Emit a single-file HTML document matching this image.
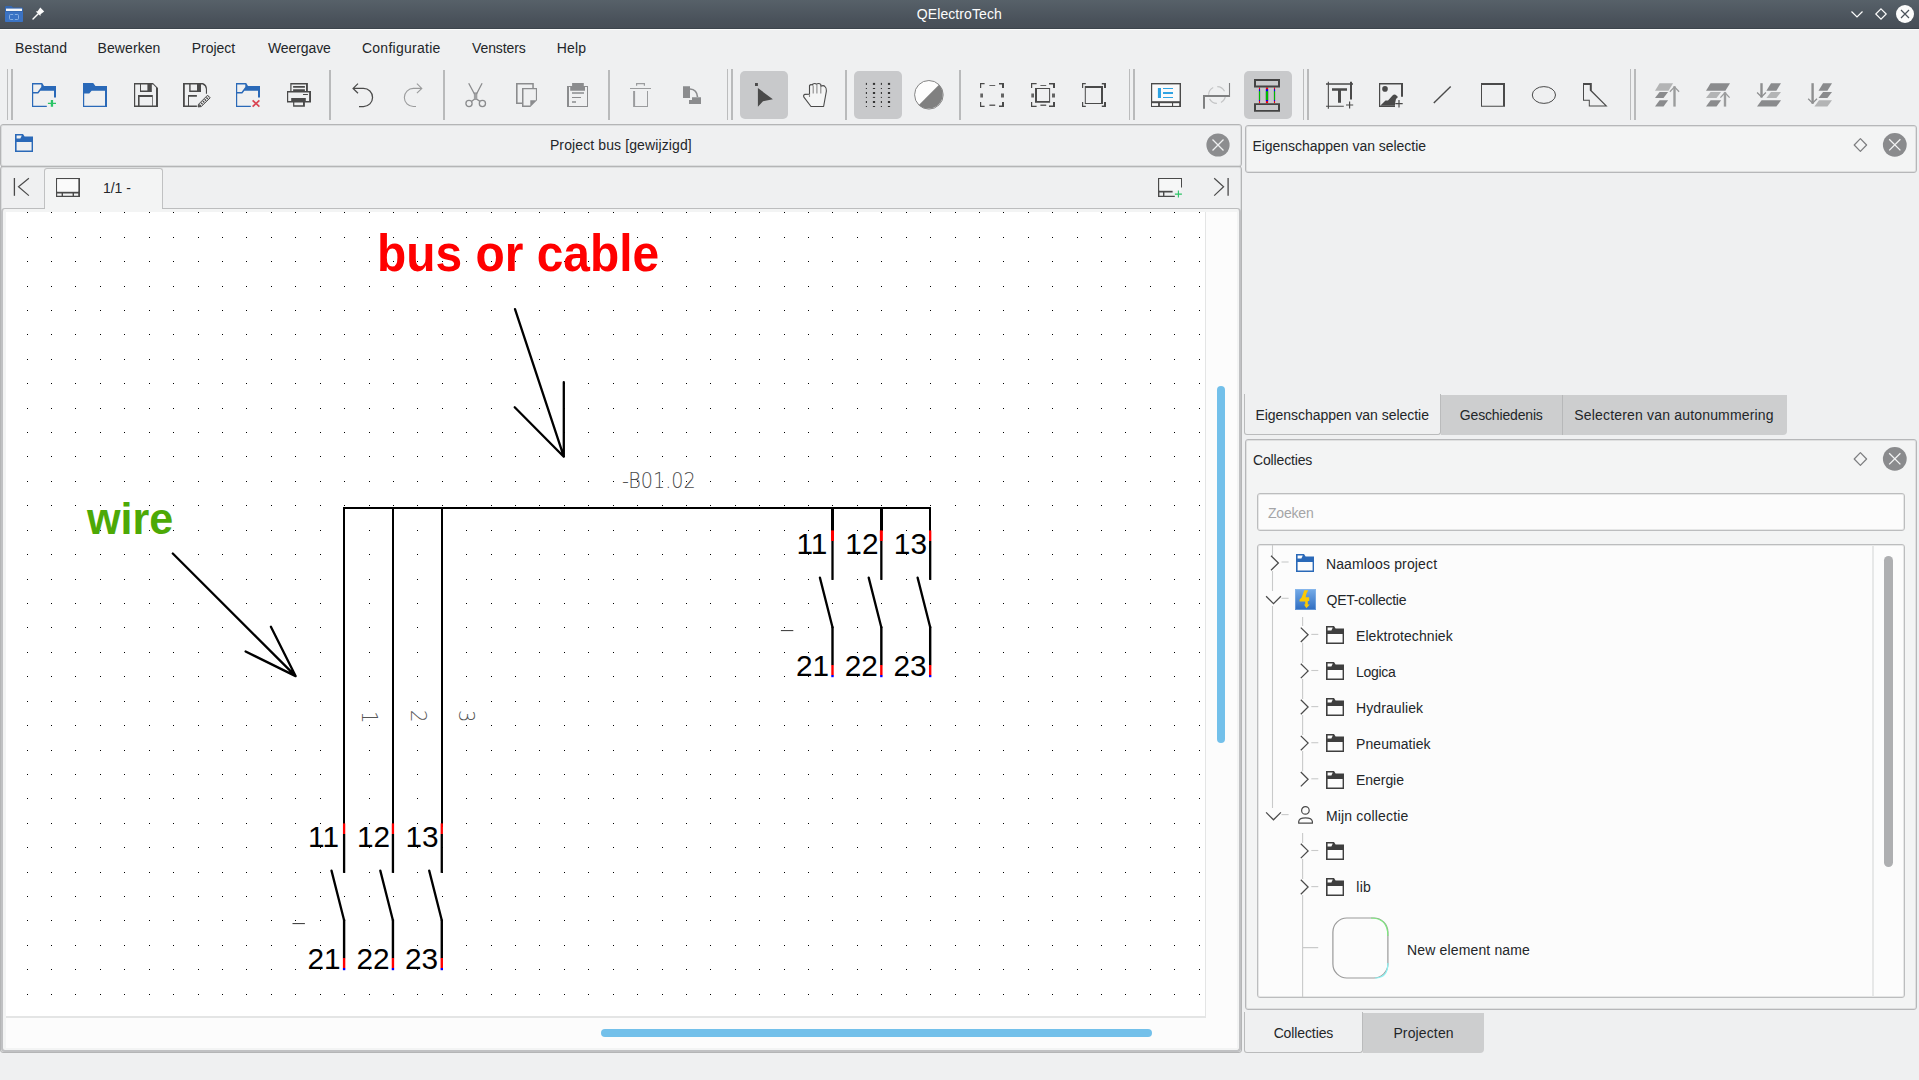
<!DOCTYPE html>
<html lang="nl"><head><meta charset="utf-8"><title>QElectroTech</title>
<style>
html,body{margin:0;padding:0}
body{width:1919px;height:1080px;overflow:hidden;position:relative;background:#eff0f1;font-family:"Liberation Sans",sans-serif;font-size:14px;color:#232629}
.a{position:absolute}
.t{position:absolute;white-space:pre;line-height:1}
svg{position:absolute;overflow:visible}
#titlebar{left:0;top:0;width:1919px;height:29px;background:linear-gradient(#576169,#4a525b 68%,#474e57 96%,#3c444c 97%)}
#tbline{left:0;top:29px;width:1919px;height:1px;background:#fbfbfb}
.frame{position:absolute;box-sizing:border-box;border:1px solid #b6b7b8;border-radius:3px;box-shadow:inset 0 0 0 1px rgba(120,122,125,.16)}
.sep{position:absolute;top:70px;height:50px;width:2px;background:#b9babb}
.h1{position:absolute;top:69px;height:51px;width:1px;background:#bbbcbd}
.h2{position:absolute;top:69px;height:51px;width:2px;background:#b9babb}
.chk{position:absolute;top:71px;height:48px;width:48px;background:#c8c9cb;border-radius:5px}
</style></head><body>
<div id="titlebar" class="a"></div><div id="tbline" class="a"></div>
<svg style="left:5px;top:6px" width="18" height="16" viewBox="0 0 18 16">
<path d="M0 1.2 Q0 0 1.2 0 H6.5 L8 1.6 H16.8 Q18 1.6 18 2.8 V14.8 Q18 16 16.8 16 H1.2 Q0 16 0 14.8Z" fill="#3467b0"/>
<rect x="1" y="2.6" width="16" height="2.4" fill="#f4f6f8"/>
<path d="M0 6 H18 V14.8 Q18 16 16.8 16 H1.2 Q0 16 0 14.8Z" fill="#3b73c4"/>
<rect x="4.5" y="8.5" width="9" height="5" rx="1" fill="none" stroke="#8fb6e6" stroke-width="0.9"/>
<path d="M8 8.5 h2 M8 13.5 h2" stroke="#3f7fcf" stroke-width="1.4"/>
</svg>
<svg style="left:32px;top:7px" width="13" height="13" viewBox="0 0 13 13">
<path d="M8.3 0.6 L12.2 4.6 L8.6 7.2 L8.4 9 L3.8 4.4 L5.6 4.2 Z" fill="#fcfcfc"/>
<path d="M6 7 L1 12" stroke="#fcfcfc" stroke-width="1.4" stroke-linecap="round"/>
</svg>
<span class="t" style="left:916.84px;top:6.85px;color:#fcfcfc;letter-spacing:0.083px;">QElectroTech</span>
<svg style="left:1845px;top:0" width="74" height="29" viewBox="1845 0 74 29">
<path d="M1851.5 11.5 L1857 17 L1862.5 11.5" fill="none" stroke="#fcfcfc" stroke-width="1.2"/>
<path d="M1881 8.8 L1886.2 14 L1881 19.2 L1875.8 14 Z" fill="none" stroke="#fcfcfc" stroke-width="1.2"/>
<circle cx="1905" cy="14" r="9" fill="#fcfcfc"/>
<path d="M1901 10 L1909 18 M1909 10 L1901 18" stroke="#4a525a" stroke-width="1.2"/>
</svg>
<span class="t" style="left:15.11px;top:41.20px;letter-spacing:0.085px;">Bestand</span>
<span class="t" style="left:97.51px;top:41.20px;letter-spacing:0.089px;">Bewerken</span>
<span class="t" style="left:191.81px;top:41.20px;letter-spacing:-0.038px;">Project</span>
<span class="t" style="left:268.00px;top:41.20px;letter-spacing:-0.098px;">Weergave</span>
<span class="t" style="left:361.94px;top:41.20px;letter-spacing:0.267px;">Configuratie</span>
<span class="t" style="left:472.00px;top:41.20px;letter-spacing:-0.091px;">Vensters</span>
<span class="t" style="left:556.81px;top:41.20px;letter-spacing:0.123px;">Help</span>
<div class="h1" style="left:7px"></div><div class="h2" style="left:11px"></div>
<div class="h1" style="left:727px"></div><div class="h2" style="left:731px"></div>
<div class="h1" style="left:1129px"></div><div class="h2" style="left:1133px"></div>
<div class="h1" style="left:1303px"></div><div class="h2" style="left:1307px"></div>
<div class="h1" style="left:1630px"></div><div class="h2" style="left:1634px"></div>
<div class="sep" style="left:329px"></div>
<div class="sep" style="left:443px"></div>
<div class="sep" style="left:608px"></div>
<div class="sep" style="left:845px"></div>
<div class="sep" style="left:959px"></div>
<div class="chk" style="left:739.6px"></div>
<div class="chk" style="left:853.6px"></div>
<div class="chk" style="left:1243.6px"></div>
<svg style="left:32px;top:83px" width="24" height="24" viewBox="0 0 24 24"><path fill="#2a69b8" d="M0 0H10.2L12 3.05H24V14.5H22V7.7H8.4L6.3 10.5H1.2V22.8H14.8V24H0Z M1.2 1.6V9.1H5.6L9.3 3.9V1.6Z" fill-rule="evenodd"/><path d="M18.8 16.9h2.3v2.8H24v1.4h-2.9v2.7h-2.3v-2.7h-2.9v-1.4h2.9z" fill="#2bc466"/></svg>
<svg style="left:83px;top:83px" width="24" height="24" viewBox="0 0 24 24"><path fill="#2a69b8" fill-rule="evenodd" d="M0 0H10.2L12.4 3.05H24V24H0Z M1.2 10.5V22.8H22V7.7H8.6L6.3 10.5Z"/></svg>
<svg style="left:134px;top:83px" width="24" height="24" viewBox="0 0 24 24"><path fill="#4a4a4a" fill-rule="evenodd" d="M0 0H19L24 5V24H0Z M1.2 1.6V22.5H4V12H18.8V22.5H22V4.5L19.1 1.6H17.8V8.9H6V1.6Z M7 1.6V7.5H13.4V1.6Z M5.6 13.9V22.5H18.1V13.9Z"/></svg>
<svg style="left:183px;top:83px" width="28" height="24" viewBox="0 0 28 24"><path fill="#4a4a4a" fill-rule="evenodd" d="M0 0H20Q24 1.5 24 6V10.8H22.9V6Q22.6 3 19.6 1.6H18V8.9H6.2V1.6H1.8V22.6H5V12H13.9V13.8H6V22.6H13.9V24H0Z M7.6 1.6V7.5H14V1.6Z"/><path d="M15 23.9L15.6 21.2L24.6 12.2L27.2 14.8L18.2 23.6Z" fill="none" stroke="#4a4a4a" stroke-width="1"/><path d="M16.6 22.8L25.8 13.6" stroke="#4a4a4a" stroke-width="2.2" stroke-dasharray="1.3 1.2"/><path d="M15 23.9L15.6 21.4L17.6 23.4Z" fill="#4a4a4a"/></svg>
<svg style="left:236px;top:83px" width="24" height="24" viewBox="0 0 24 24"><path fill="#2a69b8" d="M0 0H10.2L12 3.05H24V14.5H22V7.7H8.4L6.3 10.5H1.2V22.8H14.8V24H0Z M1.2 1.6V9.1H5.6L9.3 3.9V1.6Z" fill-rule="evenodd"/><path d="M16.6 17.4L23.4 23.6M23.4 17.4L16.6 23.6" stroke="#da4453" stroke-width="1.7"/></svg>
<svg style="left:287px;top:83px" width="24" height="24" viewBox="0 0 24 24"><path fill="#4a4a4a" fill-rule="evenodd" d="M3.3 0H20.9V8H24V19.6H17.9V23.8H6.1V19.6H0V8H3.3Z M4.5 1.6V8H6.1V6.2H17.9V8H19V1.6Z M6.1 3H17.9V4.7H6.1Z M1.2 9.4V18.1H4.2V15.1H18.8V18.1H22.1V9.4Z M16 10.9H20.9V12H16Z M7.3 19.6V22.3H16V19.6Z"/><path d="M4.5 1.6H19V8H4.5Z M1.2 9.4H22.1V18.1H1.2Z M7.3 19.6H16V22.3H7.3Z" fill="#fbfbfb" style="mix-blend-mode:normal" opacity="0"/></svg>
<svg style="left:350px;top:80px" width="26" height="30" viewBox="0 0 26 30"><path d="M8 3.6L3.1 8.4L8 13.2M3.1 8.4H13.5A9.05 9.05 0 0 1 13.5 26.5H9" fill="none" stroke="#4a4a4a" stroke-width="1.25"/></svg>
<svg style="left:400px;top:80px" width="26" height="30" viewBox="0 0 26 30"><path d="M16.9 3.6L21.8 8.4L16.9 13.2M21.8 8.4H13.4A9.05 9.05 0 0 0 13.4 26.5H16" fill="none" stroke="#9a9b9c" stroke-width="1.1"/></svg>
<svg style="left:464px;top:82px" width="24" height="26" viewBox="0 0 24 26"><g fill="none" stroke="#8b8c8e" stroke-width="1.3"><path d="M4.7 1.3L10.6 12.2M18.1 1.3L12.4 12.2"/><circle cx="5" cy="21.5" r="3.1"/><circle cx="18.4" cy="21.5" r="3.1"/><path d="M10.4 17.2L7.4 19.4M12.8 17.2L16 19.4"/></g><rect x="9.9" y="10.4" width="3.4" height="7.6" fill="#8b8c8e" opacity=".8"/></svg>
<svg style="left:516px;top:83px" width="22" height="24" viewBox="0 0 22 24"><path fill="#8b8c8e" fill-rule="evenodd" d="M0 0H17.8V5H21V17.2L14.3 23.9H6V21H0Z M1.6 1.6V19.5H6V5H16.3V1.6Z M7.5 6.2V22.5H14.3V17.2H19.9V6.2Z"/></svg>
<svg style="left:567px;top:83px" width="21" height="24" viewBox="0 0 21 24"><path fill="#8b8c8e" fill-rule="evenodd" d="M5.1 0H16.8V3H21V24H0V3H5.1Z M2 4V23H20V4H18V7.7H3.2V4Z M5 9.2H17V10.8H5Z M5 13.9H14V14.9H5Z M5 18.2H9V19.8H5Z"/></svg>
<svg style="left:630px;top:83px" width="21" height="24" viewBox="0 0 21 24"><path fill="#9b9c9e" fill-rule="evenodd" d="M6 0H15V2.8H13.8V1.3H7.2V2.8H6Z M0 5H21V6.1H0Z M3.1 8H5.1V23H17V8H18V24H3.1Z"/></svg>
<svg style="left:683px;top:86px" width="18" height="18" viewBox="0 0 18 18"><path fill="#8b8c8e" d="M0 0.2H7V12H0Z M9 11.2H18V18H6V14H9Z"/><path d="M7 3Q14 3.5 14.5 11" fill="none" stroke="#8b8c8e" stroke-width="1.6"/></svg>
<svg style="left:755px;top:83px" width="18" height="24" viewBox="0 0 18 24"><path fill="#4a4a4a" d="M0 0H2.9V3H0Z M2.9 5.1L17.9 16.2L8 18.2L2.9 23.8Z"/></svg>
<svg style="left:803px;top:83px" width="24" height="24" viewBox="0 0 24 24"><path d="M8 23.5L0.9 14.2Q0 12.2 1.6 11.4L6.5 11.2V2.6Q7.6 0.9 9.6 2V1.2Q12 -0.3 13.4 1.2Q15.8 -0.2 17.8 1.4V3.2Q20.6 1.8 22 3.6Q23.6 5 23.4 8L20.6 23.5Z" fill="#f4f5f5" stroke="#4a4a4a" stroke-width="1.1" stroke-linejoin="round"/><path d="M6.5 11.2V14M10.2 2.5V10.5M13.9 1.8V10.5M17.8 3.2V10.5" stroke="#8a8a8a" stroke-width="1.1" fill="none"/></svg>
<svg style="left:865px;top:83px" width="26" height="24" viewBox="0 0 26 24"><rect x="0.85" y="-0.10" width="1.1" height="2.0" fill="#333"/><rect x="0.85" y="5.00" width="1.1" height="1.0" fill="#333"/><rect x="0.85" y="9.00" width="1.1" height="2.0" fill="#333"/><rect x="0.85" y="13.90" width="1.1" height="1.0" fill="#333"/><rect x="0.85" y="18.00" width="1.1" height="2.0" fill="#333"/><rect x="0.85" y="23.00" width="1.1" height="1.0" fill="#333"/><rect x="7.90" y="-0.10" width="2.2" height="2.0" fill="#333"/><rect x="7.90" y="5.00" width="2.2" height="1.0" fill="#333"/><rect x="7.90" y="9.00" width="2.2" height="2.0" fill="#333"/><rect x="7.90" y="13.90" width="2.2" height="1.0" fill="#333"/><rect x="7.90" y="18.00" width="2.2" height="2.0" fill="#333"/><rect x="7.90" y="23.00" width="2.2" height="1.0" fill="#333"/><rect x="15.85" y="-0.10" width="1.1" height="2.0" fill="#333"/><rect x="15.85" y="5.00" width="1.1" height="1.0" fill="#333"/><rect x="15.85" y="9.00" width="1.1" height="2.0" fill="#333"/><rect x="15.85" y="13.90" width="1.1" height="1.0" fill="#333"/><rect x="15.85" y="18.00" width="1.1" height="2.0" fill="#333"/><rect x="15.85" y="23.00" width="1.1" height="1.0" fill="#333"/><rect x="22.90" y="-0.10" width="2.2" height="2.0" fill="#333"/><rect x="22.90" y="5.00" width="2.2" height="1.0" fill="#333"/><rect x="22.90" y="9.00" width="2.2" height="2.0" fill="#333"/><rect x="22.90" y="13.90" width="2.2" height="1.0" fill="#333"/><rect x="22.90" y="18.00" width="2.2" height="2.0" fill="#333"/><rect x="22.90" y="23.00" width="2.2" height="1.0" fill="#333"/></svg>
<svg style="left:913px;top:79px" width="32" height="32" viewBox="0 0 32 32"><circle cx="15.9" cy="15.8" r="14.3" fill="#fdfdfd"/><path d="M5.8 25.9A14.3 14.3 0 0 0 26 5.7Z" fill="#808080"/><circle cx="15.9" cy="15.8" r="14.3" fill="none" stroke="#858585" stroke-width="1"/></svg>
<svg style="left:980px;top:83px" width="24" height="24" viewBox="0 0 24 24"><path fill="#4a4a4a" d="M0 0H4.6V1.2H1.2V5H0Z M19.0 0H24V5H22V1.5H19.0Z M0 19H1.2V22.8H4.6V24H0Z M22 19H24V24H19.0V22.4H22Z"/><path fill="#4a4a4a" d="M9.4 2H15.2V3H9.4Z M9.4 21.5H15.2V23H9.4Z M0.3 10.5H3V14.5H0.3Z M21 10.5H24V14.5H21Z" opacity="0.85"/></svg>
<svg style="left:1031px;top:83px" width="24" height="24" viewBox="0 0 24 24"><path fill="#4a4a4a" d="M0 0H5.6V1.2H1.2V5H0Z M18.0 0H24V5H22V1.5H18.0Z M0 19H1.2V22.8H5.6V24H0Z M22 19H24V24H18.0V22.4H22Z"/><path fill="#4a4a4a" d="M9.4 2H15.2V3H9.4Z M9.4 21.5H15.2V23H9.4Z M0.3 10.5H3V14.5H0.3Z M21 10.5H24V14.5H21Z" opacity="0.85"/><path fill="#4a4a4a" fill-rule="evenodd" d="M4 5H19.1V19.8H4Z M6 6V18H18.1V6Z"/></svg>
<svg style="left:1082px;top:83px" width="24" height="24" viewBox="0 0 24 24"><path fill="#4a4a4a" d="M0 0H3.8V1.2H1.2V5H0Z M19.8 0H24V5H22V1.5H19.8Z M0 19H1.2V22.8H3.8V24H0Z M22 19H24V24H19.8V22.4H22Z"/><path fill="#4a4a4a" fill-rule="evenodd" d="M2.8 2.9H21V21.1H2.8Z M3.8 4.9V20.1H19V4.9Z"/></svg>
<svg style="left:1151px;top:83px" width="30" height="24" viewBox="0 0 30 24"><rect x="0" y="0" width="30" height="24" fill="#4a4a4a"/><rect x="1.2" y="1.4" width="27.4" height="16.8" fill="#fafafa"/><rect x="1" y="20.2" width="6.1" height="2.7" fill="#fafafa"/><rect x="8.9" y="20.2" width="12.1" height="2.7" fill="#fafafa"/><rect x="22.1" y="20.2" width="6.1" height="2.7" fill="#fafafa"/><path fill="#2fa3e3" d="M6.9 4.9H10V14.9H6.9Z M12 4.9H22V6.1H12Z M12 9.1H22V11H12Z M12 13.9H22V15.1H12Z"/></svg>
<svg style="left:1202px;top:82px" width="30" height="28" viewBox="0 0 30 28"><circle cx="15" cy="13" r="8.4" fill="none" stroke="#c4c5c6" stroke-width="1.2" stroke-dasharray="9 4.2"/><path d="M2 26.8V14H27.9" fill="none" stroke="#7f8081" stroke-width="2"/><path d="M27.5 1V15" stroke="#7f8081" stroke-width="1.1"/></svg>
<svg style="left:1254px;top:79px" width="26" height="33" viewBox="0 0 26 33"><rect x="4.95" y="8.4" width="1.1" height="15.8" fill="#f00"/><rect x="4.95" y="10.2" width="1.1" height="12" fill="#00f"/><rect x="4.95" y="12.2" width="1.1" height="8.8" fill="#0b0"/><rect x="11.90" y="8.4" width="2.2" height="15.8" fill="#f00"/><rect x="11.90" y="10.2" width="2.2" height="12" fill="#00f"/><rect x="11.90" y="12.2" width="2.2" height="8.8" fill="#0b0"/><rect x="19.95" y="8.4" width="1.1" height="15.8" fill="#f00"/><rect x="19.95" y="10.2" width="1.1" height="12" fill="#00f"/><rect x="19.95" y="12.2" width="1.1" height="8.8" fill="#0b0"/><path fill="#444" fill-rule="evenodd" d="M0 0H26V8.4H0Z M2 2V6.6H24V2Z M0 24.2H26V32.8H0Z M2 26V31H24V26Z"/></svg>
<svg style="left:1326px;top:81px" width="28" height="28" viewBox="0 0 28 28"><path fill="#4a4a4a" d="M1.8 0.8H2.9V27.8H1.8Z M0 2.2H27V3.8H0Z M24 0.8H26V18.6H24Z M0 24.7H17.8V25.7H0Z M6 7.2H21V9.8H6Z M12 9.8H15V21.8H12Z M23 20.4H24.2V27.6H23Z M20 23.4H27.2V24.6H20Z"/></svg>
<svg style="left:1379px;top:83px" width="24" height="24" viewBox="0 0 24 24"><path fill="#4a4a4a" d="M0 0H24V13.8H22V1.6H1.2V22.8H16V24H0Z"/><circle cx="6" cy="5.9" r="2.8" fill="#4a4a4a"/><path fill="#4a4a4a" d="M1.2 22.8L6.5 17.5H9L13.5 12.5Q15.5 10.5 17.5 12.5L19 14L17 16L16 20.5V22.8Z M19.4 16.9H20.6V24.4H19.4Z M16.3 20H23.7V21.2H16.3Z"/></svg>
<svg style="left:1432px;top:85px" width="20" height="20" viewBox="0 0 20 20"><path d="M1.8 18L18.7 1.5" stroke="#4a4a4a" stroke-width="1.4"/></svg>
<svg style="left:1481px;top:83px" width="24" height="24" viewBox="0 0 24 24"><path fill="#4a4a4a" fill-rule="evenodd" d="M0 0H24V23.8H0Z M1 2V22.8H22V2Z"/></svg>
<svg style="left:1531px;top:85px" width="26" height="20" viewBox="0 0 26 20"><ellipse cx="12.9" cy="10" rx="11.6" ry="8.4" fill="none" stroke="#4a4a4a" stroke-width="1"/></svg>
<svg style="left:1583px;top:83px" width="25" height="24" viewBox="0 0 25 24"><path fill="#4a4a4a" fill-rule="evenodd" d="M0 0H8.8V7.4L24.6 23.6H5.8V17.8H0Z M1 2V16.8H6.8V22.6H22L6.8 7.6V2Z"/></svg>
<svg style="left:1655px;top:83px" width="26" height="24" viewBox="0 0 26 24"><path d="M4.6 0.2H18.1L13.5 7.7H0Z" fill="#b3b4b5"/><path d="M4.6 8.9H13.1L8.5 15H0Z" fill="#8a8b8d"/><path d="M4.6 17.3H13.1L8.5 23.6H0Z" fill="#8a8b8d"/><path d="M19.5 3.3V23.6" stroke="#9b9c9d" stroke-width="2.4"/><path d="M14.9 8.7L19.5 3.9L24.1 8.7" fill="none" stroke="#9b9c9d" stroke-width="1.3"/></svg>
<svg style="left:1706px;top:83px" width="26" height="24" viewBox="0 0 26 24"><path d="M4.6 0.2H24.0L19.4 7.7H0Z" fill="#8a8b8d"/><path d="M4.6 8.9H15.1L10.5 15H0Z" fill="#b3b4b5"/><path d="M4.6 17.3H15.1L10.5 23.6H0Z" fill="#8a8b8d"/><path d="M19 9.2V23.6" stroke="#9b9c9d" stroke-width="2.4"/><path d="M14.4 14.6L19 9.799999999999999L23.6 14.6" fill="none" stroke="#9b9c9d" stroke-width="1.3"/></svg>
<svg style="left:1757px;top:83px" width="26" height="24" viewBox="0 0 26 24"><path d="M14.0 0.2H24.0L19.4 7.7H9.4Z" fill="#8a8b8d"/><path d="M14.0 8.9H24.0L19.4 15H9.4Z" fill="#b3b4b5"/><path d="M4.6 17.3H24.0L19.4 23.6H0Z" fill="#8a8b8d"/><path d="M4.5 0.2V14.5" stroke="#8e8f90" stroke-width="2.4"/><path d="M0.09999999999999964 9.5L4.5 13.9L8.9 9.5" fill="none" stroke="#8e8f90" stroke-width="1.3"/></svg>
<svg style="left:1808px;top:83px" width="26" height="24" viewBox="0 0 26 24"><path d="M15.1 0.2H24.0L19.4 7.7H10.5Z" fill="#8a8b8d"/><path d="M15.1 8.9H24.0L19.4 15H10.5Z" fill="#8a8b8d"/><path d="M11.0 17.3H24.0L19.4 23.6H6.4Z" fill="#b3b4b5"/><path d="M4.6 0.2V20.7" stroke="#8e8f90" stroke-width="2.4"/><path d="M0.1999999999999993 15.7L4.6 20.099999999999998L9.0 15.7" fill="none" stroke="#8e8f90" stroke-width="1.3"/></svg>
<div class="frame" style="left:0;top:124px;width:1242px;height:43px;border-color:#b4b5b6;background:#eff0f1"></div>
<div class="frame" style="left:0;top:166px;width:1242px;height:887px;border-color:#b4b5b6;border-top-width:1px"></div>
<div class="a" style="left:1px;top:166px;width:1240px;height:1px;background:#b4b5b6"></div>
<div class="a" style="left:44px;top:168px;width:119px;height:42px;box-sizing:border-box;border:1px solid #c0c1c2;border-bottom:none;border-radius:3px 3px 0 0;background:#f3f4f4"></div>
<div class="a" style="left:1px;top:208px;width:1240px;height:844px;box-sizing:border-box;border:2px solid #c0c1c3;border-top-width:1px;border-top-color:#bcbdbe;border-radius:4px;background:#f3f4f4"></div>
<div class="a" style="left:45px;top:208px;width:117px;height:1px;background:#f3f4f4"></div>
<div class="a" style="left:6px;top:212px;width:1231px;height:836px;background:#fcfcfc"></div>
<div class="a" style="left:6px;top:1016px;width:1200px;height:2px;background:#e4e5e5"></div>
<div class="a" style="left:1205px;top:212px;width:1px;height:805px;background:#e4e5e5"></div>
<div class="a" style="left:1217px;top:386px;width:8px;height:357px;border-radius:4px;background:#73c0ea"></div>
<div class="a" style="left:601px;top:1028.5px;width:551px;height:8px;border-radius:4px;background:#73c0ea"></div>
<svg style="left:15px;top:134px" width="18" height="18" viewBox="0 0 18 18"><path fill="#2a69b8" fill-rule="evenodd" d="M0 0H8L9.6 2.4H18V18H0Z M1.6 1.6V4.6H5.4L6.8 1.6Z M1.6 8V16.6H16.6V8Z"/></svg>
<span class="t" style="left:549.91px;top:137.85px;letter-spacing:0.113px;">Project bus [gewijzigd]</span>
<svg style="left:1206px;top:133px" width="24" height="24" viewBox="0 0 24 24"><circle cx="12" cy="12" r="11.6" fill="#8c8d8f"/><path d="M6.5 6.5L17.5 17.5M17.5 6.5L6.5 17.5" stroke="#eff0f1" stroke-width="1.3"/></svg>
<svg style="left:12px;top:177px" width="20" height="20" viewBox="0 0 20 20"><path d="M2.4 1V18.8" stroke="#4a4a4a" stroke-width="1.3"/><path d="M16.9 1.2L6.5 9.7L16.9 18.6" fill="none" stroke="#4a4a4a" stroke-width="1.2"/></svg>
<svg style="left:56px;top:178px" width="24" height="19" viewBox="0 0 24 19"><path fill="#4a4a4a" fill-rule="evenodd" d="M0 0H24V19H0Z M1.2 1.2V13.6H22.2V1.2Z M1.2 15.6V17.8H5.6V15.6Z M7 15.6V17.8H16.6V15.6Z M18 15.6V17.8H22.2V15.6Z"/><rect x="1.2" y="1.2" width="21" height="12.4" fill="#fafafa"/></svg>
<span class="t" style="left:102.92px;top:181.00px;letter-spacing:0.017px;">1/1 -</span>
<svg style="left:1158px;top:178px" width="26" height="20" viewBox="0 0 26 20"><path fill="#4a4a4a" d="M0 0H24V9.5H23V1H1.4V12.6H14.6V14.4H6.4V17.8H16.8V19H0Z M1.4 14.4V17.8H5V14.4Z"/><rect x="1.4" y="1" width="21.6" height="11.6" fill="#f6f7f7"/><path d="M20.4 12.6V19.6M16.9 16.1H23.9" stroke="#2bc466" stroke-width="1.1"/></svg>
<svg style="left:1212px;top:177px" width="20" height="20" viewBox="0 0 20 20"><path d="M16.1 1V18.8" stroke="#4a4a4a" stroke-width="1.3"/><path d="M2.2 1.2L11.6 9.7L2.2 18.6" fill="none" stroke="#4a4a4a" stroke-width="1.2"/></svg>
<svg style="left:6px;top:212px;overflow:hidden" width="1199" height="804" viewBox="6 212 1199 804"><rect x="6" y="212" width="1199" height="804" fill="#fff"/><defs><g id="gr" fill="#000" shape-rendering="crispEdges"><rect x="27" y="0" width="1" height="1"/><rect x="51" y="0" width="1" height="1"/><rect x="75" y="0" width="1" height="1"/><rect x="100" y="0" width="1" height="1"/><rect x="124" y="0" width="1" height="1"/><rect x="149" y="0" width="1" height="1"/><rect x="173" y="0" width="1" height="1"/><rect x="198" y="0" width="1" height="1"/><rect x="222" y="0" width="1" height="1"/><rect x="246" y="0" width="1" height="1"/><rect x="271" y="0" width="1" height="1"/><rect x="295" y="0" width="1" height="1"/><rect x="320" y="0" width="1" height="1"/><rect x="344" y="0" width="1" height="1"/><rect x="369" y="0" width="1" height="1"/><rect x="393" y="0" width="1" height="1"/><rect x="417" y="0" width="1" height="1"/><rect x="442" y="0" width="1" height="1"/><rect x="466" y="0" width="1" height="1"/><rect x="491" y="0" width="1" height="1"/><rect x="515" y="0" width="1" height="1"/><rect x="539" y="0" width="1" height="1"/><rect x="564" y="0" width="1" height="1"/><rect x="588" y="0" width="1" height="1"/><rect x="613" y="0" width="1" height="1"/><rect x="637" y="0" width="1" height="1"/><rect x="662" y="0" width="1" height="1"/><rect x="686" y="0" width="1" height="1"/><rect x="710" y="0" width="1" height="1"/><rect x="735" y="0" width="1" height="1"/><rect x="759" y="0" width="1" height="1"/><rect x="784" y="0" width="1" height="1"/><rect x="808" y="0" width="1" height="1"/><rect x="832" y="0" width="1" height="1"/><rect x="857" y="0" width="1" height="1"/><rect x="881" y="0" width="1" height="1"/><rect x="906" y="0" width="1" height="1"/><rect x="930" y="0" width="1" height="1"/><rect x="955" y="0" width="1" height="1"/><rect x="979" y="0" width="1" height="1"/><rect x="1003" y="0" width="1" height="1"/><rect x="1028" y="0" width="1" height="1"/><rect x="1052" y="0" width="1" height="1"/><rect x="1077" y="0" width="1" height="1"/><rect x="1101" y="0" width="1" height="1"/><rect x="1125" y="0" width="1" height="1"/><rect x="1150" y="0" width="1" height="1"/><rect x="1174" y="0" width="1" height="1"/><rect x="1199" y="0" width="1" height="1"/></g></defs><use href="#gr" y="212"/><use href="#gr" y="237"/><use href="#gr" y="261"/><use href="#gr" y="286"/><use href="#gr" y="310"/><use href="#gr" y="334"/><use href="#gr" y="359"/><use href="#gr" y="383"/><use href="#gr" y="408"/><use href="#gr" y="432"/><use href="#gr" y="456"/><use href="#gr" y="481"/><use href="#gr" y="505"/><use href="#gr" y="530"/><use href="#gr" y="554"/><use href="#gr" y="579"/><use href="#gr" y="603"/><use href="#gr" y="627"/><use href="#gr" y="652"/><use href="#gr" y="676"/><use href="#gr" y="701"/><use href="#gr" y="725"/><use href="#gr" y="750"/><use href="#gr" y="774"/><use href="#gr" y="798"/><use href="#gr" y="823"/><use href="#gr" y="847"/><use href="#gr" y="872"/><use href="#gr" y="896"/><use href="#gr" y="920"/><use href="#gr" y="945"/><use href="#gr" y="969"/><use href="#gr" y="994"/><g fill="none" stroke="#000" stroke-width="2.3" stroke-linecap="round"><path d="M515 309.2L563.8 456.7M563.8 382.2V456.7M514.7 407.2L563.8 456.7"/><path d="M172.8 553.5L295.6 676.1M270.9 626.7L295.6 676.1M245.6 651.5L295.6 676.1"/></g><g fill="#000" shape-rendering="crispEdges"><rect x="343" y="507" width="588" height="2"/><rect x="343" y="507" width="2" height="320"/><rect x="392" y="507" width="2" height="320"/><rect x="441" y="507" width="2" height="320"/><rect x="831" y="507" width="3" height="24"/><rect x="880" y="507" width="3" height="24"/><rect x="929" y="507" width="2" height="24"/></g><rect x="831.00" y="530.4" width="3" height="10.6" fill="#f00"/><rect x="831.35" y="541.0" width="2.3" height="38.9" fill="#000"/><path d="M819.9 577.6L832.5 627.2" stroke="#000" stroke-width="2.3" stroke-linecap="round"/><rect x="831.30" y="626.6" width="2.4" height="38.6" fill="#000"/><rect x="831.30" y="665.0" width="2.4" height="10.2" fill="#f00"/><rect x="831.30" y="675.0" width="2.4" height="2.2" fill="#00f"/><rect x="879.84" y="530.4" width="3" height="10.6" fill="#f00"/><rect x="880.19" y="541.0" width="2.3" height="38.9" fill="#000"/><path d="M868.7 577.6L881.3 627.2" stroke="#000" stroke-width="2.3" stroke-linecap="round"/><rect x="880.14" y="626.6" width="2.4" height="38.6" fill="#000"/><rect x="880.14" y="665.0" width="2.4" height="10.2" fill="#f00"/><rect x="880.14" y="675.0" width="2.4" height="2.2" fill="#00f"/><rect x="929.03" y="530.4" width="2.3" height="10.6" fill="#f00"/><rect x="929.03" y="541.0" width="2.3" height="38.9" fill="#000"/><path d="M917.6 577.6L930.2 627.2" stroke="#000" stroke-width="2.3" stroke-linecap="round"/><rect x="928.98" y="626.6" width="2.4" height="38.6" fill="#000"/><rect x="928.98" y="665.0" width="2.4" height="10.2" fill="#f00"/><rect x="928.98" y="675.0" width="2.4" height="2.2" fill="#00f"/><rect x="780.9" y="630.1" width="12.4" height="1" fill="#333"/><rect x="342.95" y="823.4" width="2.3" height="10.6" fill="#f00"/><rect x="342.95" y="834.0" width="2.3" height="38.9" fill="#000"/><path d="M331.5 870.6L344.1 920.2" stroke="#000" stroke-width="2.3" stroke-linecap="round"/><rect x="342.90" y="919.6" width="2.4" height="38.6" fill="#000"/><rect x="342.90" y="958.0" width="2.4" height="10.2" fill="#f00"/><rect x="342.90" y="968.0" width="2.4" height="2.2" fill="#00f"/><rect x="391.79" y="823.4" width="2.3" height="10.6" fill="#f00"/><rect x="391.79" y="834.0" width="2.3" height="38.9" fill="#000"/><path d="M380.3 870.6L392.9 920.2" stroke="#000" stroke-width="2.3" stroke-linecap="round"/><rect x="391.74" y="919.6" width="2.4" height="38.6" fill="#000"/><rect x="391.74" y="958.0" width="2.4" height="10.2" fill="#f00"/><rect x="391.74" y="968.0" width="2.4" height="2.2" fill="#00f"/><rect x="440.63" y="823.4" width="2.3" height="10.6" fill="#f00"/><rect x="440.63" y="834.0" width="2.3" height="38.9" fill="#000"/><path d="M429.2 870.6L441.8 920.2" stroke="#000" stroke-width="2.3" stroke-linecap="round"/><rect x="440.58" y="919.6" width="2.4" height="38.6" fill="#000"/><rect x="440.58" y="958.0" width="2.4" height="10.2" fill="#f00"/><rect x="440.58" y="968.0" width="2.4" height="2.2" fill="#00f"/><rect x="292.5" y="923.1" width="12.4" height="1" fill="#333"/></svg>
<span class="t" style="left:377.31px;top:226.60px;font-size:52px;font-weight:bold;color:#ff0000;transform-origin:0 0;transform:scaleX(0.9212);">bus or cable</span>
<span class="t" style="left:86.97px;top:496.15px;font-size:45px;font-weight:bold;color:#4da906;transform-origin:0 0;transform:scaleX(0.9584);">wire</span>
<span class="t" style="left:621.90px;top:470.30px;font-size:22px;font-weight:200;color:#4a4a4a;font-family:'DejaVu Sans',sans-serif;transform-origin:0 0;transform:scaleX(0.8719);">-B01.02</span>
<span class="t" style="left:796.44px;top:528.57px;font-size:29.8px;color:#000;">11</span>
<span class="t" style="left:845.34px;top:528.57px;font-size:29.8px;color:#000;">12</span>
<span class="t" style="left:893.84px;top:528.57px;font-size:29.8px;color:#000;">13</span>
<span class="t" style="left:795.90px;top:650.77px;font-size:29.8px;color:#000;">21</span>
<span class="t" style="left:844.80px;top:650.77px;font-size:29.8px;color:#000;">22</span>
<span class="t" style="left:893.40px;top:650.77px;font-size:29.8px;color:#000;">23</span>
<span class="t" style="left:308.04px;top:821.57px;font-size:29.8px;color:#000;">11</span>
<span class="t" style="left:356.94px;top:821.57px;font-size:29.8px;color:#000;">12</span>
<span class="t" style="left:405.44px;top:821.57px;font-size:29.8px;color:#000;">13</span>
<span class="t" style="left:307.50px;top:943.77px;font-size:29.8px;color:#000;">21</span>
<span class="t" style="left:356.40px;top:943.77px;font-size:29.8px;color:#000;">22</span>
<span class="t" style="left:405.00px;top:943.77px;font-size:29.8px;color:#000;">23</span>
<span class="t" style="left:359.1px;top:710.5px;font-size:21px;font-weight:200;font-family:'DejaVu Sans',sans-serif;color:#555;transform-origin:0 0;transform:translate(-1px,0) rotate(90deg) translate(0,-100%) scaleX(0.93)">1</span>
<span class="t" style="left:407.6px;top:709.7px;font-size:21px;font-weight:200;font-family:'DejaVu Sans',sans-serif;color:#555;transform-origin:0 0;transform:translate(-1px,0) rotate(90deg) translate(0,-100%) scaleX(0.93)">2</span>
<span class="t" style="left:456.4px;top:709.7px;font-size:21px;font-weight:200;font-family:'DejaVu Sans',sans-serif;color:#555;transform-origin:0 0;transform:translate(-1px,0) rotate(90deg) translate(0,-100%) scaleX(0.93)">3</span>
<div class="frame" style="left:1245px;top:125px;width:672px;height:48px;border-color:#b6b7b9;background:#f3f4f4"></div>
<span class="t" style="left:1252.41px;top:138.80px;letter-spacing:-0.027px;">Eigenschappen van selectie</span>
<svg style="left:1853px;top:136.7px" width="16" height="16" viewBox="0 0 16 16"><path d="M7.4 1.6L13.6 8L7.4 14.4L1.2 8Z" fill="none" stroke="#7c7d7f" stroke-width="1.2" stroke-linejoin="round"/></svg>
<svg style="left:1882px;top:131.7px" width="26" height="26" viewBox="0 0 26 26"><circle cx="12.8" cy="12.8" r="11.9" fill="#8a8b8d"/><path d="M7.2 7.2L18.4 18.4M18.4 7.2L7.2 18.4" stroke="#f3f4f4" stroke-width="1.3"/></svg>
<div class="a" style="left:1441px;top:395px;width:345.5px;height:40px;background:#cdcecf;border-radius:0 0 4px 0"></div>
<div class="a" style="left:1562px;top:395px;width:1px;height:40px;background:#b7b8b9"></div>
<div class="a" style="left:1244px;top:394px;width:197px;height:41px;box-sizing:border-box;border:1px solid #babbbc;border-top:none;border-radius:0 0 3px 3px;background:#eff0f1"></div>
<span class="t" style="left:1255.51px;top:407.85px;letter-spacing:-0.037px;">Eigenschappen van selectie</span>
<span class="t" style="left:1459.84px;top:408.00px;letter-spacing:-0.167px;">Geschiedenis</span>
<span class="t" style="left:1574.36px;top:408.00px;letter-spacing:0.173px;">Selecteren van autonummering</span>
<div class="frame" style="left:1245px;top:439px;width:672px;height:571px;border-color:#b6b7b9;background:#f3f4f4"></div>
<span class="t" style="left:1253.04px;top:452.85px;letter-spacing:-0.161px;">Collecties</span>
<svg style="left:1853px;top:450.5px" width="16" height="16" viewBox="0 0 16 16"><path d="M7.4 1.6L13.6 8L7.4 14.4L1.2 8Z" fill="none" stroke="#7c7d7f" stroke-width="1.2" stroke-linejoin="round"/></svg>
<svg style="left:1882px;top:445.5px" width="26" height="26" viewBox="0 0 26 26"><circle cx="12.8" cy="12.8" r="11.9" fill="#8a8b8d"/><path d="M7.2 7.2L18.4 18.4M18.4 7.2L7.2 18.4" stroke="#f3f4f4" stroke-width="1.3"/></svg>
<div class="frame" style="left:1257px;top:493px;width:648px;height:38px;border-color:#bcbdbe;background:#fcfcfc"></div>
<span class="t" style="left:1267.96px;top:506.00px;color:#a4a5a7;letter-spacing:-0.195px;">Zoeken</span>
<div class="frame" style="left:1257px;top:544px;width:648px;height:454px;border-color:#bcbdbe;background:#fcfcfc;overflow:hidden"></div>
<div class="a" style="left:1872px;top:545px;width:2px;height:452px;background:#e7e8e8"></div>
<div class="a" style="left:1884px;top:556px;width:9px;height:311px;border-radius:4.5px;background:#aeafb1"></div>
<svg style="left:1258px;top:545px" width="130" height="452" viewBox="1258 545 130 452"><g stroke="#c9caca" stroke-width="1.1" fill="none"><path d="M1272.5 545V556M1272.5 571V591M1272.5 606V808"/><path d="M1302.6 617V626M1302.6 642.8V662.9M1302.6 678.9V699.0M1302.6 715.0V735.1M1302.6 751.1V771.2"/><path d="M1302.6 833V843M1302.6 859V879M1302.6 895V997M1302.6 947.6H1318.2"/><path d="M1281.5 562H1288.6"/><path d="M1281.5 598.3H1288.6"/><path d="M1281.5 814.6H1288.6"/><path d="M1311.3 634.4H1318.3"/><path d="M1311.3 670.5H1318.3"/><path d="M1311.3 706.6H1318.3"/><path d="M1311.3 742.7H1318.3"/><path d="M1311.3 778.8H1318.3"/><path d="M1311.3 850.5H1318.3"/><path d="M1311.3 886.6H1318.3"/></g><g stroke="#4a4a4a" stroke-width="1.25" fill="none"><path d="M1271 555.7L1278.4 563L1271 570.3"/><path d="M1266.1 596.2L1273.5 603.6L1280.9 596.2"/><path d="M1266.1 812.4L1273.5 819.8L1280.9 812.4"/><path d="M1300.8 627.6L1308.1 634.8L1300.8 642.0"/><path d="M1300.8 663.7L1308.1 670.9L1300.8 678.1"/><path d="M1300.8 699.8L1308.1 707.0L1300.8 714.2"/><path d="M1300.8 735.9L1308.1 743.1L1300.8 750.3"/><path d="M1300.8 772.0L1308.1 779.2L1300.8 786.4"/><path d="M1300.8 843.7L1308.1 850.9L1300.8 858.1"/><path d="M1300.8 879.8L1308.1 887.0L1300.8 894.2"/></g></svg>
<svg style="left:1296px;top:554px" width="18" height="18" viewBox="0 0 18 18"><path fill="#2a69b8" fill-rule="evenodd" d="M0 0H8L9.6 2.4H18V18H0Z M1.6 1.6V4.6H5.4L6.8 1.6Z M1.6 8V16.6H16.6V8Z"/></svg>
<svg style="left:1295px;top:589px" width="21" height="21" viewBox="0 0 21 21"><defs><linearGradient id="qg" x1="0" y1="0" x2="0" y2="1"><stop offset="0" stop-color="#76ace8"/><stop offset="1" stop-color="#2e6cc0"/></linearGradient></defs><rect width="21" height="21" fill="url(#qg)"/><rect x="0.5" y="0.5" width="20" height="20" fill="none" stroke="#9cc3f0" stroke-opacity=".45"/><path d="M9.3 1.2H13.2L11.4 4.8L10.6 8.2H14.2V12H12.8V15.4H14.8L11.4 19.2L9 15.4H10.2V12.4H4.6V10.6L6.6 8.6Z" fill="#fbc904"/></svg>
<svg style="left:1326px;top:626px" width="18" height="18" viewBox="0 0 18 18"><path fill="#3f3f3f" fill-rule="evenodd" d="M0 0H8L9.6 2.4H18V18H0Z M1.6 1.6V4.6H5.4L6.8 1.6Z M1.6 8V16.6H16.6V8Z"/></svg>
<svg style="left:1326px;top:662px" width="18" height="18" viewBox="0 0 18 18"><path fill="#3f3f3f" fill-rule="evenodd" d="M0 0H8L9.6 2.4H18V18H0Z M1.6 1.6V4.6H5.4L6.8 1.6Z M1.6 8V16.6H16.6V8Z"/></svg>
<svg style="left:1326px;top:698px" width="18" height="18" viewBox="0 0 18 18"><path fill="#3f3f3f" fill-rule="evenodd" d="M0 0H8L9.6 2.4H18V18H0Z M1.6 1.6V4.6H5.4L6.8 1.6Z M1.6 8V16.6H16.6V8Z"/></svg>
<svg style="left:1326px;top:734px" width="18" height="18" viewBox="0 0 18 18"><path fill="#3f3f3f" fill-rule="evenodd" d="M0 0H8L9.6 2.4H18V18H0Z M1.6 1.6V4.6H5.4L6.8 1.6Z M1.6 8V16.6H16.6V8Z"/></svg>
<svg style="left:1326px;top:771px" width="18" height="18" viewBox="0 0 18 18"><path fill="#3f3f3f" fill-rule="evenodd" d="M0 0H8L9.6 2.4H18V18H0Z M1.6 1.6V4.6H5.4L6.8 1.6Z M1.6 8V16.6H16.6V8Z"/></svg>
<svg style="left:1326px;top:842px" width="18" height="18" viewBox="0 0 18 18"><path fill="#3f3f3f" fill-rule="evenodd" d="M0 0H8L9.6 2.4H18V18H0Z M1.6 1.6V4.6H5.4L6.8 1.6Z M1.6 8V16.6H16.6V8Z"/></svg>
<svg style="left:1326px;top:878px" width="18" height="18" viewBox="0 0 18 18"><path fill="#3f3f3f" fill-rule="evenodd" d="M0 0H8L9.6 2.4H18V18H0Z M1.6 1.6V4.6H5.4L6.8 1.6Z M1.6 8V16.6H16.6V8Z"/></svg>
<svg style="left:1298px;top:806px" width="16" height="19" viewBox="0 0 16 19"><circle cx="7.4" cy="4.4" r="3.8" fill="none" stroke="#4a4a4a" stroke-width="1.2"/><path d="M0.7 17.2V15.6Q1 11.8 7.5 11.8Q14 11.8 14.4 15.6V17.2Z" fill="none" stroke="#4a4a4a" stroke-width="1.2" stroke-linejoin="round"/></svg>
<svg style="left:1332px;top:917px" width="57" height="62" viewBox="0 0 57 62"><rect x="0.9" y="1" width="55" height="60" rx="14" ry="14" fill="none" stroke="#9a9a9a" stroke-width="1.2"/><path d="M39 1Q55.9 1 55.9 19" fill="none" stroke="#7dea7d" stroke-width="1.2"/><path d="M55.9 46Q55.9 61 43 61" fill="none" stroke="#8df1f1" stroke-width="1.2"/></svg>
<span class="t" style="left:1325.91px;top:556.70px;letter-spacing:0.147px;">Naamloos project</span>
<span class="t" style="left:1326.54px;top:592.90px;letter-spacing:-0.277px;">QET-collectie</span>
<span class="t" style="left:1356.01px;top:629.00px;letter-spacing:0.068px;">Elektrotechniek</span>
<span class="t" style="left:1356.01px;top:664.90px;letter-spacing:-0.310px;">Logica</span>
<span class="t" style="left:1356.01px;top:700.80px;letter-spacing:0.104px;">Hydrauliek</span>
<span class="t" style="left:1356.01px;top:736.90px;letter-spacing:0.072px;">Pneumatiek</span>
<span class="t" style="left:1356.01px;top:773.00px;letter-spacing:-0.049px;">Energie</span>
<span class="t" style="left:1325.91px;top:808.80px;letter-spacing:0.179px;">Mijn collectie</span>
<span class="t" style="left:1356.22px;top:880.30px;letter-spacing:0.318px;">lib</span>
<span class="t" style="left:1407.11px;top:942.90px;letter-spacing:0.143px;">New element name</span>
<div class="a" style="left:1363px;top:1013px;width:120.6px;height:40px;background:#cdcecf;border-radius:0 0 4px 0"></div>
<div class="a" style="left:1244px;top:1012px;width:119px;height:41px;box-sizing:border-box;border:1px solid #babbbc;border-top:none;border-radius:0 0 3px 3px;background:#eff0f1"></div>
<span class="t" style="left:1273.64px;top:1025.80px;letter-spacing:-0.111px;">Collecties</span>
<span class="t" style="left:1393.41px;top:1025.80px;letter-spacing:0.129px;">Projecten</span>
</body></html>
